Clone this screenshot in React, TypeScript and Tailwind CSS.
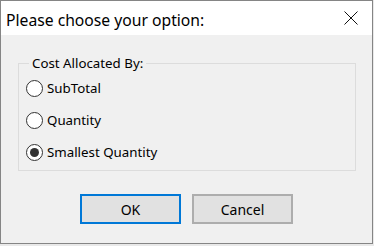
import React from "react";

function Radio({ label, checked }: { label: string; checked?: boolean }) {
  return (
    <div className="flex h-[32px] items-center">
      <span className="ml-[7px] flex h-[17px] w-[17px] items-center justify-center rounded-full border-[1.5px] border-[#333333] bg-white">
        {checked && <span className="h-[9px] w-[9px] rounded-full bg-[#333333]" />}
      </span>
      <span className="ml-[4px] text-[13.3px] leading-[16px] text-black">{label}</span>
    </div>
  );
}

export default function App() {
  return (
    <div
      className="h-[246px] w-[374px] bg-[#e9e9e9]"
      style={{ fontFamily: '"Noto Sans", "Liberation Sans", sans-serif' }}
    >
      <div className="flex h-[244px] w-[373px] flex-col border border-[#858585] bg-[#f0f0f0]">
        <div className="flex h-[34px] items-center justify-between bg-white pl-[5px] pr-[14px] pt-[3px]">
          <span className="text-[15.7px] leading-[20px] text-black">Please choose your option:</span>
          <svg width="14" height="14" viewBox="0 0 14 14" className="mb-[4px]">
            <path d="M0.5 0.5 L13.5 13.5 M13.5 0.5 L0.5 13.5" stroke="#111" strokeWidth="1" fill="none" />
          </svg>
        </div>
        <fieldset className="ml-[17px] mt-[20px] w-[338px] border border-[#dcdcdc] pb-[2px] pt-[1px]">
          <legend className="ml-[10px] px-[3px] text-[13.3px] leading-[16px] text-black">Cost Allocated By:</legend>
          <Radio label="SubTotal" />
          <Radio label="Quantity" />
          <Radio label="Smallest Quantity" checked />
        </fieldset>
        <div className="ml-[79px] mt-[23px] flex gap-[11px]">
          <button className="flex h-[30px] w-[101px] items-center justify-center border-2 border-[#0078d7] bg-[#e1e1e1] text-[14px] text-black">
            OK
          </button>
          <button className="flex h-[30px] w-[101px] items-center justify-center border-2 border-[#adadad] bg-[#e1e1e1] text-[14px] text-black">
            Cancel
          </button>
        </div>
      </div>
    </div>
  );
}
